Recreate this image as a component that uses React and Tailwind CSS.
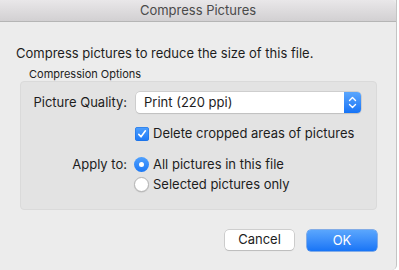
import React, { useState } from 'react';

const font = { fontFamily: 'Inter, "Liberation Sans", sans-serif' };

function Stepper() {
  return (
    <div className="flex h-full w-[17px] items-center justify-center rounded-r-[4px] bg-gradient-to-b from-[#5aa6fd] to-[#1473f6]">
      <svg width="9" height="13" viewBox="0 0 9 13" fill="none" stroke="white" strokeWidth="1.4" strokeLinecap="round" strokeLinejoin="round">
        <path d="M1.5 4.5 L4.5 1.5 L7.5 4.5" />
        <path d="M1.5 8.5 L4.5 11.5 L7.5 8.5" />
      </svg>
    </div>
  );
}

function Checkbox({ checked }) {
  return (
    <div className="flex h-[14px] w-[14px] items-center justify-center rounded-[3px] bg-gradient-to-b from-[#4fa0fd] to-[#1a78f6] shadow-[inset_0_0_0_0.5px_#1a6fe0]">
      {checked && (
        <svg width="10" height="10" viewBox="0 0 10 10" fill="none" stroke="white" strokeWidth="1.6" strokeLinecap="round" strokeLinejoin="round">
          <path d="M1.8 5.4 L4 7.8 L8.4 1.8" />
        </svg>
      )}
    </div>
  );
}

function Radio({ on }) {
  return on ? (
    <div className="flex h-[15px] w-[15px] items-center justify-center rounded-full bg-gradient-to-b from-[#4fa0fd] to-[#1a78f6]">
      <div className="h-[5px] w-[5px] rounded-full bg-white" />
    </div>
  ) : (
    <div className="h-[15px] w-[15px] rounded-full border border-[#b4b4b4] bg-white shadow-[0_0.5px_1px_rgba(0,0,0,0.15)]" />
  );
}

export default function App() {
  const [applyAll, setApplyAll] = useState(true);

  return (
    <div className="h-[270px] w-[399px] bg-white text-[13px] text-[#1d1d1d]" style={font}>
      <div className="flex h-[270px] w-[397px] flex-col rounded-br-[5px] border-r border-[#c4c4c4] bg-[#ececec]">
        {/* title bar */}
        <div className="flex h-[22px] items-center justify-center rounded-tr-[5px] border-b border-[#b5b5b5] bg-gradient-to-b from-[#e9e7e9] to-[#d2d0d2] text-[13px] text-[#4a4a4a]">
          Compress Pictures
        </div>

        <div className="pl-[16px] pt-[23px] leading-[16px]">Compress pictures to reduce the size of this file.</div>
        <div className="pl-[29px] pt-[7px] text-[11px] leading-[13px] text-[#222]">Compression Options</div>

        {/* options box */}
        <div className="ml-[20px] flex h-[129px] w-[357px] flex-col rounded-[4px] border border-[#dadada] bg-[#e3e3e3] pt-[10px]">
          <div className="flex h-[21px] items-center">
            <div className="w-[106px] text-right">Picture Quality:</div>
            <div className="ml-[9px] flex h-[21px] w-[225px] items-center rounded-[4px] bg-white shadow-[0_0_0_0.5px_#b9b9b9,0_1px_1px_rgba(0,0,0,0.12)]">
              <div className="flex-1 pl-[8px]">Print (220 ppi)</div>
              <Stepper />
            </div>
          </div>

          <div className="mt-[14px] flex h-[14px] items-center pl-[114px]">
            <Checkbox checked />
            <span className="ml-[4px]">Delete cropped areas of pictures</span>
          </div>

          <div className="mt-[16px] flex h-[15px] items-center">
            <div className="w-[106px] text-right">Apply to:</div>
            <div className="ml-[7px] flex items-center" onClick={() => setApplyAll(true)}>
              <Radio on={applyAll} />
              <span className="ml-[4px]">All pictures in this file</span>
            </div>
          </div>
          <div className="mt-[5px] flex h-[15px] items-center pl-[113px]" onClick={() => setApplyAll(false)}>
            <Radio on={!applyAll} />
            <span className="ml-[4px]">Selected pictures only</span>
          </div>
        </div>

        {/* buttons */}
        <div className="mt-[20px] flex justify-end gap-[13px] pr-[19px]">
          <button className="h-[20px] w-[69px] rounded-[4px] bg-white text-[13px] text-[#1d1d1d] shadow-[0_0_0_0.5px_#b0b0b0,0_1px_1px_rgba(0,0,0,0.15)]">
            Cancel
          </button>
          <button className="h-[21px] w-[70px] rounded-[4px] bg-gradient-to-b from-[#5aa6fd] to-[#1774f6] text-[13px] text-white shadow-[0_0_0_0.5px_#1b6de0]">
            OK
          </button>
        </div>
      </div>
    </div>
  );
}
